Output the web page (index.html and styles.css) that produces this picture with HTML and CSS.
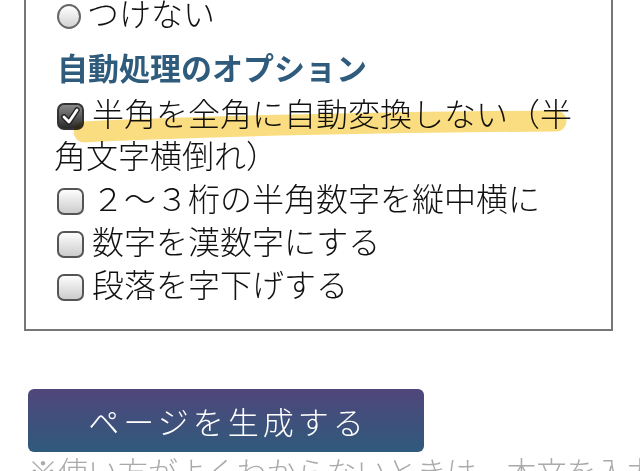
FILE: index.html
```html
<!DOCTYPE html>
<html lang="ja">
<head>
  <meta charset="UTF-8">
  <meta name="viewport" content="width=device-width, initial-scale=1.0">
  <title>ページを生成する</title>
  <link rel="stylesheet" href="styles.css">
</head>
<body>
  <div class="panel">
    <label class="row first">
      <span class="radio"></span>つけない
    </label>

    <h2>自動処理のオプション</h2>
    <label class="row">
      <span class="box checked">
        <svg viewBox="0 0 27 27" width="27" height="27">
          <path d="M7 14 L12 19 L20 7" fill="none" stroke="#222" stroke-width="5.5" stroke-linecap="round" stroke-linejoin="round"/>
          <path d="M7 14 L12 19 L20 7" fill="none" stroke="#fff" stroke-width="2.8" stroke-linecap="round" stroke-linejoin="round"/>
        </svg>
      </span>半角を全角に自動変換しない（半角文字横倒れ）
    </label>
    <label class="row"><span class="box"></span>２～３桁の半角数字を縦中横に</label>
    <label class="row"><span class="box"></span>数字を漢数字にする</label>
    <label class="row"><span class="box"></span>段落を字下げする</label>
  </div>

  <button class="generate" type="button">ページを生成する</button>
  <p class="note">※使い方がよくわからないときは、本文を入力してください</p>

  <!-- marker stroke drawn over the first option -->
  <svg class="marker" width="640" height="200" viewBox="0 0 640 200">
    <path d="M84 132 C 200 126, 400 122, 556 121" fill="none" stroke="#f8cf4a" stroke-width="21" stroke-linecap="round" opacity="0.7"/>
  </svg>
</body>
</html>
```

FILE: styles.css
```css
body {
  margin: 0;
  width: 640px;
  height: 471px;
  overflow: hidden;
  background: #fff;
  font-family: "Noto Sans CJK JP", "Noto Sans", sans-serif;
  color: #111;
}
.panel {
  margin: 0 27px 0 24px;
  border: 2px solid #777;
  border-top: none;
  padding: 0 20px 25px 28px;
}
.row {
  display: block;
  margin-top: 1px;
  font-size: 32px;
  font-weight: 300;
  line-height: 42px;
}
.row.first {
  margin-top: -9px;
}
h2 {
  margin: 13px 0 3px 3px;
  font-size: 31px;
  line-height: 42px;
  font-weight: bold;
  color: #2f5b7c;
}
.radio {
  display: inline-block;
  box-sizing: border-box;
  width: 24px;
  height: 25px;
  margin: 0 6px 0 3px;
  border: 2px solid #666;
  border-radius: 50%;
  background: linear-gradient(#fff, #d2d2d2);
  vertical-align: -3px;
}
.box {
  display: inline-block;
  box-sizing: border-box;
  width: 27px;
  height: 27px;
  margin: 0 8px 0 3px;
  border: 2px solid #555;
  border-radius: 7px;
  background: linear-gradient(#fdfdfd, #cccccc);
  vertical-align: -4px;
}
.box.checked {
  background: linear-gradient(#8a8a8a, #2a2a2a);
  border-color: #333;
}
.box svg {
  display: block;
  margin: -2px;
}
.generate {
  display: block;
  width: 396px;
  height: 63px;
  margin: 58px 0 0 28px;
  border: none;
  border-radius: 6px;
  background: linear-gradient(#50467b, #2f5a7b);
  color: #fff;
  font-family: inherit;
  font-size: 31px;
  font-weight: 300;
  letter-spacing: 4px;
  text-indent: 4px;
}
.note {
  margin: -3px 0 0 28px;
  font-size: 30px;
  font-weight: 300;
  line-height: 42px;
  color: #aaa;
  white-space: nowrap;
}
.marker {
  position: absolute;
  left: 0;
  top: 0;
  pointer-events: none;
  mix-blend-mode: multiply;
}
```
